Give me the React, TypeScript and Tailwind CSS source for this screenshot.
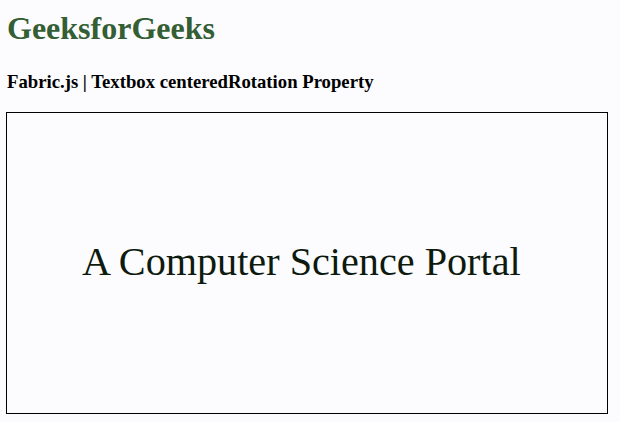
export default function App() {
  return (
    <div className="w-[620px] h-[422px] bg-[#fcfcfe] overflow-hidden" style={{ fontFamily: '"Liberation Serif", serif' }}>
      <div className="pl-[7px] pt-[10px]">
        <h1 className="text-[32px] leading-[36px] font-bold text-[#345e34]">GeeksforGeeks</h1>
        <h3 className="mt-[25px] text-[18.72px] leading-[22px] font-bold text-black">Fabric.js | Textbox centeredRotation Property</h3>
      </div>
      <div className="ml-[6px] mt-[19px] w-[602px] h-[302px] border border-black flex items-center justify-start pl-[75px]">
        <span className="text-[40.2px] leading-none text-[#0e1a0e] mt-[-2px]">A Computer Science Portal</span>
      </div>
    </div>
  );
}
